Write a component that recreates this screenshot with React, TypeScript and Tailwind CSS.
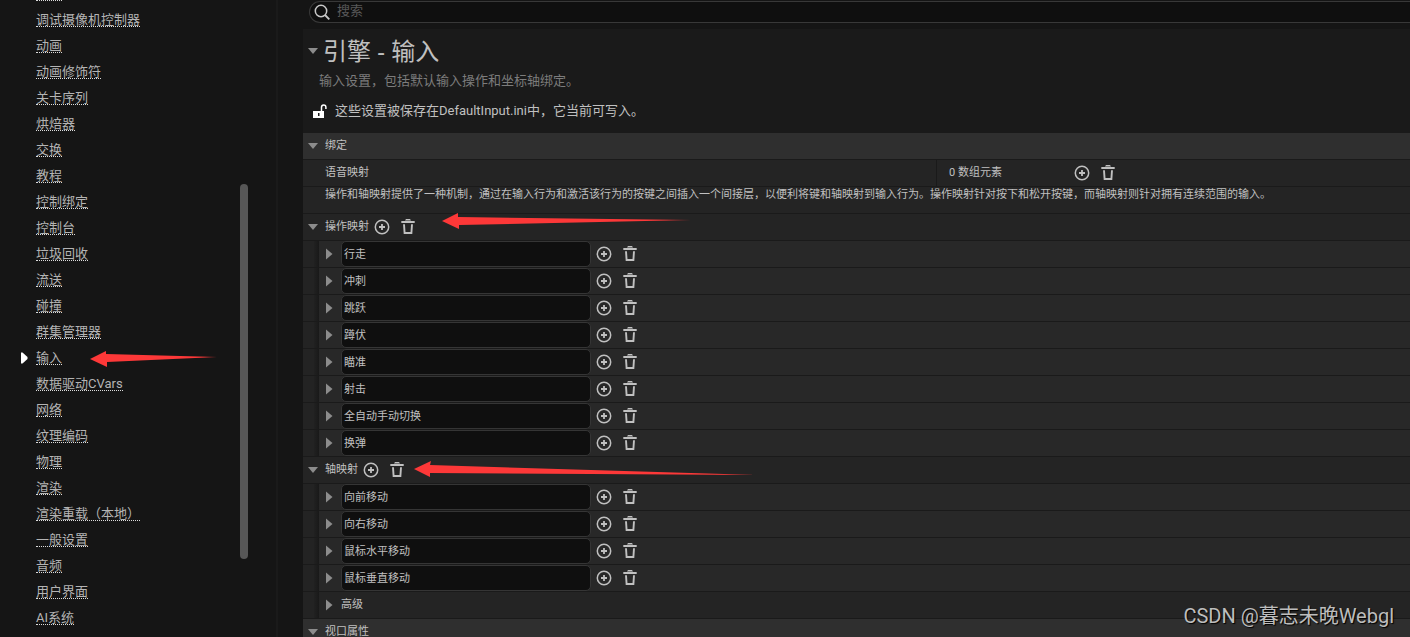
import React from 'react';

const categories = [
  '调试摄像机控制器',
  '动画',
  '动画修饰符',
  '关卡序列',
  '烘焙器',
  '交换',
  '教程',
  '控制绑定',
  '控制台',
  '垃圾回收',
  '流送',
  '碰撞',
  '群集管理器',
  '输入',
  '数据驱动CVars',
  '网络',
  '纹理编码',
  '物理',
  '渲染',
  '渲染重载（本地）',
  '一般设置',
  '音频',
  '用户界面',
  'AI系统',
];

const actionMappings = ['行走', '冲刺', '跳跃', '蹲伏', '瞄准', '射击', '全自动手动切换', '换弹'];

const axisMappings = ['向前移动', '向右移动', '鼠标水平移动', '鼠标垂直移动'];

const PlusIcon: React.FC = () => (
  <svg width="16" height="16" viewBox="0 0 16 16" fill="none" stroke="#c0c0c0">
    <circle cx="8" cy="8" r="6.7" strokeWidth="1.5" />
    <path d="M8 5v6M5 8h6" strokeWidth="1.8" />
  </svg>
);

const TrashIcon: React.FC = () => (
  <svg width="16" height="16" viewBox="0 0 16 16" fill="none" stroke="#c0c0c0">
    <path d="M5 1.5L6 0h4l1 1.500z" fill="#c0c0c0" stroke="none" />
    <path d="M1.300 3h13.400" strokeWidth="2" />
    <path d="M4 5.200l0.600 8.800h6.800l0.600-8.800" strokeWidth="1.900" />
  </svg>
);

const LockIcon: React.FC = () => (
  <svg width="16" height="16" viewBox="0 0 16 16">
    <path fill="#fff" fillRule="evenodd" d="M1 8h11v7H1zM6 10v3h1.500v-3z" />
    <path d="M9.500 8V4.200a2.200 2.200 0 0 1 4.400 0V6" fill="none" stroke="#fff" strokeWidth="1.500" />
  </svg>
);

const SearchIcon: React.FC = () => (
  <svg width="16" height="16" viewBox="0 0 16 16" fill="none" stroke="#c8c8c8">
    <circle cx="7" cy="7" r="5.700" strokeWidth="1.500" />
    <path d="M11 11l4.300 4.300" strokeWidth="1.800" />
  </svg>
);

const Expander: React.FC<{ open?: boolean; label: string }> = ({ open, label }) => (
  <button type="button" aria-label={label} aria-expanded={!!open} className="flex h-5 w-5 shrink-0 items-center justify-center">
    <svg width="12" height="12" viewBox="0 0 12 12" fill="#8c8c8c">
      <path d={open ? 'M1 3h10L6 9z' : 'M3 0.500v11L9.500 6z'} />
    </svg>
  </button>
);

const RowActions: React.FC<{ label: string }> = ({ label }) => (
  <div className="flex shrink-0">
    <button type="button" aria-label={`添加 ${label}`} className="flex h-[26px] w-[26px] items-center justify-center">
      <PlusIcon />
    </button>
    <button type="button" aria-label={`删除 ${label}`} className="flex h-[26px] w-[26px] items-center justify-center">
      <TrashIcon />
    </button>
  </div>
);

const GroupRow: React.FC<{ label: string }> = ({ label }) => (
  <div className="flex h-[27px] items-center border-b border-[#1a1a1a] bg-[#242424]">
    <Expander open label={label} />
    <span className="pl-[2px]">{label}</span>
    <RowActions label={label} />
  </div>
);

const Indent: React.FC = () => (
  <div className="flex h-full w-4 shrink-0">
    <div className="w-[11px] bg-[#232323]" />
    <div className="flex-1 bg-gradient-to-r from-[#212121] to-[#191919]" />
  </div>
);

const MappingRow: React.FC<{ name: string }> = ({ name }) => (
  <div className="flex h-[27px] items-center border-b border-[#1a1a1a] bg-[#282828]">
    <Indent />
    <Expander label={name} />
    <input
      type="text"
      aria-label="映射名称"
      defaultValue={name}
      className="ml-[2px] h-[26px] w-[250px] rounded-[5px] border border-[#353535] bg-[#0f0f0f] px-[2px] pb-[3px] text-[#c0c0c0] outline-none"
    />
    <RowActions label={name} />
  </div>
);

const SectionHeader: React.FC<{ label: string }> = ({ label }) => (
  <h2 className="flex h-[27px] items-center border-b border-[#1a1a1a] bg-[#2f2f2f]">
    <Expander open label={label} />
    <span className="pl-[2px]">{label}</span>
  </h2>
);

const Sidebar: React.FC = () => (
  <aside className="flex w-[278px] shrink-0 overflow-hidden border-r-2 border-[#1a1a1a]">
    <nav className="w-[240px] text-[13px]">
      {/* tail of the entry scrolled off the top */}
      <div className="ml-9 w-[26px] border-b border-dotted border-[#dcdcdc]" />
      <ul>
        {categories.map((name) => (
          <li key={name} className="flex h-[26px] items-end">
            <span className="flex h-[14px] w-9 items-center pl-[21px]">
              {name === '输入' && (
                <svg width="7" height="12" viewBox="0 0 7 12" fill="#fff">
                  <path d="M0 0.500h1.500L6.500 5v2L1.500 11.500H0z" />
                </svg>
              )}
            </span>
            <a href="#" className="border-b border-dotted border-[#dcdcdc] leading-[13px] text-[#b4b4b4]">
              {name}
            </a>
          </li>
        ))}
      </ul>
    </nav>
    <div className="mt-[184px] h-[375px] w-2 rounded-full bg-[#575757]" />
  </aside>
);

const Arrow: React.FC<{ id: string; className: string; width: number; points: string }> = ({ id, className, width, points }) => (
  <svg className={`pointer-events-none absolute ${className}`} width={width} height="18" viewBox={`0 0 ${width} 18`}>
    <defs>
      <linearGradient id={id}>
        <stop offset="0.900" stopColor="#fd3838" />
        <stop offset="1" stopColor="#fd3838" stopOpacity="0.700" />
      </linearGradient>
    </defs>
    <polygon points={points} fill={`url(#${id})`} />
  </svg>
);

const App: React.FC = () => {
  return (
    <div className="relative flex h-screen overflow-hidden bg-[#151515] text-[#c0c0c0] [font-family:Roboto,'Noto_Sans_CJK_SC',sans-serif]">
      <Sidebar />
      <main className="flex min-w-0 flex-1 flex-col pl-[25px]">
        <div className="ml-[6px] mt-px flex h-[22px] shrink-0 items-center rounded-l-full border border-r-0 border-[#383838] bg-[#0f0f0f] pl-1">
          <SearchIcon />
          <input
            type="search"
            aria-label="搜索"
            placeholder="搜索"
            className="ml-[7px] min-w-0 flex-1 bg-transparent pb-[2px] text-[13px] outline-none placeholder:text-[#585858]"
          />
        </div>

        <div className="mt-[6px] flex-1 bg-[#1a1a1a] text-[11px]">
          <header className="h-[104px] pt-[6px]">
            <div className="flex h-8 items-center">
              <Expander open label="引擎 - 输入" />
              <h1 className="text-[24px] leading-8 [font-family:'Noto_Sans','Noto_Sans_CJK_SC',sans-serif]">引擎 - 输入</h1>
            </div>
            <p className="pl-4 pt-1 text-[13px] leading-5 text-[#7c7c7c]">输入设置，包括默认输入操作和坐标轴绑定。</p>
            <div className="mt-[10px] flex h-5 items-center gap-[7px] pl-[9px] text-[13px]">
              <LockIcon />
              <span>这些设置被保存在DefaultInput.ini中，它当前可写入。</span>
            </div>
          </header>

          <SectionHeader label="绑定" />
          <div className="flex h-[27px] items-center border-b border-[#1a1a1a] bg-[#242424]">
            <div className="flex h-full w-[634px] shrink-0 items-center border-r border-[#1a1a1a] pl-[22px]">语音映射</div>
            <span className="w-[132px] shrink-0 pl-3">0 数组元素</span>
            <RowActions label="语音映射" />
          </div>
          <p className="h-[27px] overflow-hidden whitespace-nowrap border-b border-[#1a1a1a] bg-[#242424] pl-[22px] leading-[15px]">
            操作和轴映射提供了一种机制，通过在输入行为和激活该行为的按键之间插入一个间接层，以便利将键和轴映射到输入行为。操作映射针对按下和松开按键，而轴映射则针对拥有连续范围的输入。
          </p>

          <GroupRow label="操作映射" />
          {actionMappings.map((name) => (
            <MappingRow key={name} name={name} />
          ))}

          <GroupRow label="轴映射" />
          {axisMappings.map((name) => (
            <MappingRow key={name} name={name} />
          ))}
          <div className="flex h-[27px] items-center border-b border-[#1a1a1a] bg-[#242424]">
            <Indent />
            <Expander label="高级" />
            <span className="pl-[2px]">高级</span>
          </div>

          <SectionHeader label="视口属性" />
        </div>
      </main>

      <Arrow id="arrow-input" className="left-[90px] top-[350px]" width={128} points="0,9 16,1 16,4 127,7 17,12 17,17" />
      <Arrow id="arrow-action" className="left-[442px] top-[212px]" width={250} points="0,9 16,1 16,5 249,8 17,13 17,17" />
      <Arrow id="arrow-axis" className="left-[414px] top-[460px]" width={344} points="0,9 17,1 16,5 343,15 16,13 16,17" />

      <div className="absolute bottom-[6px] right-4 text-[20px] leading-[30px] text-[#bdbdbd] [text-shadow:1px_1px_1px_#000]">
        CSDN @暮志未晚Webgl
      </div>
    </div>
  );
};

export default App;
